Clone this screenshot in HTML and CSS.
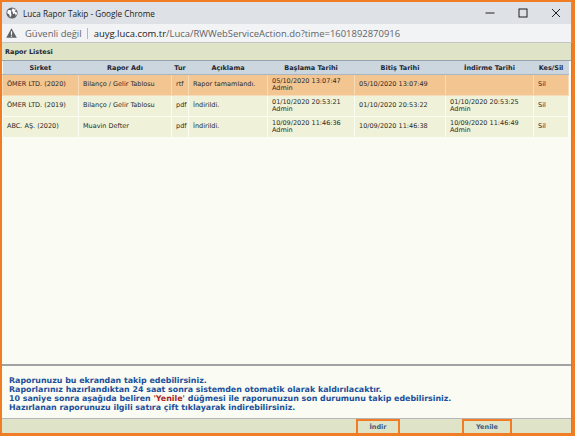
FILE: index.html
```html
<!DOCTYPE html>
<html lang="tr">
<head>
<meta charset="utf-8">
<title>Luca Rapor Takip</title>
<link rel="stylesheet" href="styles.css">
</head>
<body>
<div class="frame">
  <div class="titlebar">
    <svg class="globe" width="12" height="12" viewBox="0 0 12 12">
      <circle cx="6" cy="6" r="5.6" fill="#5f6368"/>
      <path d="M2.2 3.2 C3.4 2.6 4.6 2.9 5.2 3.8 C5.6 4.6 4.8 5.2 4.9 6 C5 6.9 5.8 7.2 5.4 8.2 C5 9.1 4.4 9.8 3.8 10.4 C3.6 9.4 3.9 8.4 3.2 7.6 C2.5 6.9 1.5 6.6 1.2 5.8 C1.2 4.8 1.6 3.9 2.2 3.2 Z" fill="#fff"/>
      <path d="M6.8 1.2 C7.6 1.6 8 2.3 8.8 2.4 C9.5 2.5 10 2.2 10.3 2.8 C9.9 3.4 9 3.6 8.8 4.4 C9.4 5 10.4 4.8 10.9 5.4 C11 6.6 10.6 7.8 9.9 8.8 C9.4 8 9.6 7 8.8 6.6 C8 6.4 7.6 7.2 7 6.8 C6.6 6.2 7 5.4 6.6 4.8 C6.2 4.2 5.6 3.8 5.8 3 C6 2.4 6.5 1.8 6.8 1.2 Z" fill="#fff"/>
    </svg>
    <span class="wintitle">Luca Rapor Takip - Google Chrome</span>
    <div class="controls">
      <svg width="10" height="10" viewBox="0 0 10 10"><line x1="0.5" y1="5" x2="9.5" y2="5" stroke="#202124" stroke-width="1"/></svg>
      <svg width="10" height="10" viewBox="0 0 10 10"><rect x="1" y="1" width="8" height="8" fill="none" stroke="#202124" stroke-width="1"/></svg>
      <svg width="10" height="10" viewBox="0 0 10 10"><path d="M1 1 L9 9 M9 1 L1 9" stroke="#202124" stroke-width="1"/></svg>
    </div>
  </div>
  <div class="addressbar">
    <svg class="warn" width="11" height="10" viewBox="0 0 11 10">
      <path d="M5.5 0.3 L10.8 9.7 L0.2 9.7 Z" fill="#5f6368"/>
      <rect x="4.9" y="3.2" width="1.2" height="3.6" fill="#fff"/>
      <rect x="4.9" y="7.6" width="1.2" height="1.2" fill="#fff"/>
    </svg>
    <span class="insecure">Güvenli değil</span>
    <span class="sep"></span>
    <span class="url"><span class="host">auyg.luca.com.tr</span>/Luca/RWWebServiceAction.do?time=1601892870916</span>
  </div>
  <div class="content">
    <div class="listhead">Rapor Listesi</div>
    <table class="grid">
      <colgroup>
        <col class="c1"><col class="c2"><col class="c3"><col class="c4"><col class="c5"><col class="c6"><col class="c7"><col class="c8">
      </colgroup>
      <thead>
        <tr>
          <th>Sirket</th><th>Rapor Adı</th><th>Tur</th><th>Açıklama</th><th>Başlama Tarihi</th><th>Bitiş Tarihi</th><th>İndirme Tarihi</th><th>Kes/Sil</th>
        </tr>
      </thead>
      <tbody>
        <tr class="sel">
          <td>ÖMER LTD. (2020)</td><td>Bilanço / Gelir Tablosu</td><td>rtf</td><td>Rapor tamamlandı.</td>
          <td><div>05/10/2020 13:07:47</div><div>Admin</div></td>
          <td>05/10/2020 13:07:49</td><td></td><td>Sil</td>
        </tr>
        <tr>
          <td>ÖMER LTD. (2019)</td><td>Bilanço / Gelir Tablosu</td><td>pdf</td><td>İndirildi.</td>
          <td><div>01/10/2020 20:53:21</div><div>Admin</div></td>
          <td>01/10/2020 20:53:22</td>
          <td><div>01/10/2020 20:53:25</div><div>Admin</div></td><td>Sil</td>
        </tr>
        <tr>
          <td>ABC. AŞ. (2020)</td><td>Muavin Defter</td><td>pdf</td><td>İndirildi.</td>
          <td><div>10/09/2020 11:46:36</div><div>Admin</div></td>
          <td>10/09/2020 11:46:38</td>
          <td><div>10/09/2020 11:46:49</div><div>Admin</div></td><td>Sil</td>
        </tr>
      </tbody>
    </table>
    <div class="spacer"></div>
    <div class="info">
      <p>Raporunuzu bu ekrandan takip edebilirsiniz.</p>
      <p>Raporlarınız hazırlandıktan 24 saat sonra sistemden otomatik olarak kaldırılacaktır.</p>
      <p>10 saniye sonra aşağıda beliren <span class="hl">'Yenile'</span> düğmesi ile raporunuzun son durumunu takip edebilirsiniz.</p>
      <p>Hazırlanan raporunuzu ilgili satıra çift tıklayarak indirebilirsiniz.</p>
    </div>
    <div class="bottombar">
      <button class="btn btn-indir">İndir</button>
      <button class="btn btn-yenile">Yenile</button>
    </div>
  </div>
</div>
</body>
</html>
```

FILE: styles.css
```css
html, body {
  margin: 0;
  padding: 0;
  width: 575px;
  height: 436px;
  overflow: hidden;
  background: #ffffff;
}

.frame {
  box-sizing: border-box;
  width: 575px;
  height: 436px;
  border-style: solid;
  border-color: #f07c24;
  border-width: 2px 3px 3px 2px;
  display: flex;
  flex-direction: column;
  overflow: hidden;
}

.titlebar {
  height: 22px;
  flex: none;
  background: #dee1e6;
  display: flex;
  align-items: center;
  padding-left: 4px;
  border-right: 1px solid #9a9a9a;
  font-family: "Open Sans", "Noto Sans", sans-serif;
}

.globe {
  flex: none;
}

.wintitle {
  margin-left: 5px;
  font-size: 8.2px;
  color: #202124;
}

.controls {
  margin-left: auto;
  display: flex;
  gap: 23px;
  padding-right: 10px;
  align-items: center;
}

.controls svg {
  display: block;
}

.addressbar {
  height: 18px;
  flex: none;
  background: #f1f3f4;
  border-bottom: 1px solid #c4c4c4;
  border-right: 1px solid #9a9a9a;
  display: flex;
  align-items: center;
  padding-left: 4px;
  font-family: "Open Sans", "Noto Sans", sans-serif;
  font-size: 9.45px;
  color: #5f6368;
}

.warn {
  flex: none;
}

.insecure {
  margin-left: 8px;
}

.sep {
  width: 1px;
  height: 11px;
  background: #b8b8b8;
  margin: 0 6px 0 5px;
}

.host {
  color: #202124;
}

.content {
  flex: 1;
  display: flex;
  flex-direction: column;
  background: #fafbf2;
  border-right: 1px solid #8c8c8c;
  font-family: "DejaVu Sans", Verdana, sans-serif;
  min-height: 0;
}

.listhead {
  height: 18px;
  flex: none;
  box-sizing: border-box;
  background: #dfe4c9;
  border-bottom: 1px solid #97a4ae;
  padding-left: 3px;
  display: flex;
  align-items: center;
  font-size: 6.5px;
  font-weight: bold;
  color: #1d2733;
}

.grid {
  width: 566px;
  border-collapse: collapse;
  table-layout: fixed;
  font-size: 6.5px;
  color: #2a2a2a;
}

.c1 { width: 76px; }
.c2 { width: 93px; }
.c3 { width: 17px; }
.c4 { width: 79px; }
.c5 { width: 87px; }
.c6 { width: 91px; }
.c7 { width: 88px; }
.c8 { width: 35px; }

.grid th {
  height: 13px;
  padding: 0;
  background: #ccd6df;
  border-bottom: 1px solid #a9b6c1;
  font-weight: bold;
  color: #1d2733;
  text-align: center;
  white-space: nowrap;
}

.grid td {
  height: 20px;
  padding: 0 0 0 4px;
  background: #eff2d8;
  border: 1px solid #fbfcf3;
  border-top: none;
  white-space: nowrap;
  vertical-align: middle;
  line-height: 7.5px;
  overflow: hidden;
}

.grid tr.sel td {
  background: #f3c591;
  border-color: #f8dcb9;
}

.spacer {
  flex: 1;
  border-bottom: 2px solid #a2a2a2;
}

.info {
  flex: none;
  height: 52px;
  box-sizing: border-box;
  padding: 10px 0 0 7px;
  font-size: 7.9px;
  font-weight: bold;
  color: #21509c;
}

.info p {
  margin: 0;
  line-height: 9px;
  white-space: nowrap;
}

.hl {
  color: #a51e1e;
}

.bottombar {
  flex: none;
  height: 14px;
  background: #dfe4c9;
  border-top: 1px solid #b6b6b6;
  position: relative;
}

.btn {
  position: absolute;
  top: 0;
  height: 16px;
  box-sizing: border-box;
  border: 2px solid #f07c24;
  background: #dfe4c9;
  font-family: "DejaVu Sans", Verdana, sans-serif;
  font-size: 6.5px;
  font-weight: bold;
  color: #3f5a7c;
  padding: 0;
  margin: 0;
}

.btn-indir {
  left: 354px;
  width: 44px;
}

.btn-yenile {
  left: 460px;
  width: 50px;
}
```
